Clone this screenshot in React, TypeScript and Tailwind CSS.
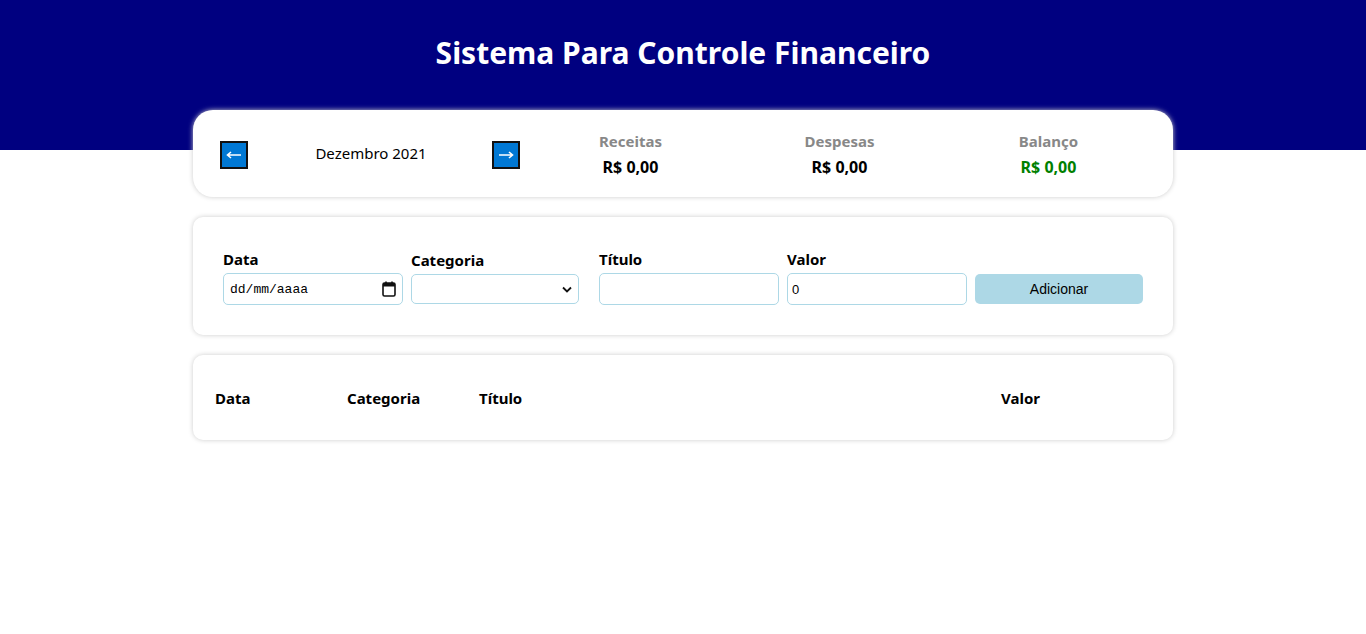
import React from "react";

function Arrow({ dir }: { dir: "left" | "right" }) {
  return (
    <button className="w-[28px] h-[28px] mt-[2px] bg-[#0078d4] border-2 border-[#111111] flex items-center justify-center">
      <svg width="16" height="10" viewBox="0 0 16 10">
        {dir === "left" ? (
          <path d="M15 5 H2 M5 2 L1.5 5 L5 8" fill="none" stroke="white" strokeWidth="1.6" />
        ) : (
          <path d="M1 5 H14 M11 2 L14.5 5 L11 8" fill="none" stroke="white" strokeWidth="1.6" />
        )}
      </svg>
    </button>
  );
}

function Info({ title, value, color }: { title: string; value: string; color?: string }) {
  return (
    <div className="flex-1 flex flex-col items-center">
      <div className="text-[15px] font-bold text-[#888888] leading-[20px]">{title}</div>
      <div className={`text-[16px] font-bold leading-[20px] mt-[6px] ${color ?? "text-black"}`}>{value}</div>
    </div>
  );
}

export default function App() {
  const font = { fontFamily: '"Noto Sans", "Open Sans", sans-serif' };
  return (
    <div className="min-h-[634px] bg-white" style={font}>
      <div className="bg-[#000080] h-[150px] flex justify-center pt-[33px]">
        <h1 className="text-white font-bold text-[30px] leading-[40px]">Sistema Para Controle Financeiro</h1>
      </div>
      <div className="w-[980px] mx-auto -mt-[40px] relative">
        {/* Card 1 */}
        <div className="bg-white rounded-[20px] shadow-[0_0_5px_#cccccc] h-[87px] px-[20px] flex items-center">
          <div className="w-[313px] flex items-center justify-between pl-[7px] pr-[6px]">
            <Arrow dir="left" />
            <div className="text-[15px] text-black pl-[2px]">Dezembro 2021</div>
            <Arrow dir="right" />
          </div>
          <div className="flex-1 flex">
            <Info title="Receitas" value="R$ 0,00" />
            <Info title="Despesas" value="R$ 0,00" />
            <Info title="Balanço" value="R$ 0,00" color="text-[#008000]" />
          </div>
        </div>

        {/* Card 2 */}
        <div className="bg-white rounded-[10px] shadow-[0_0_5px_#cccccc] mt-[20px] h-[118px] pl-[30px] pt-[32px] flex">
          <div className="w-[180px] mr-[8px]">
            <div className="font-bold text-[15px] leading-[20px] mb-[4px]">Data</div>
            <div className="h-[32px] border border-[#add8e6] rounded-[5px] flex items-center justify-between px-[6px]">
              <span className="text-[13px] text-black pt-[2px]" style={{ fontFamily: '"Liberation Mono", monospace' }}>dd/mm/aaaa</span>
              <svg width="14" height="16" viewBox="0 0 14 16">
                <rect x="1" y="2" width="12" height="13" rx="1.5" fill="none" stroke="#111" strokeWidth="1.6" />
                <rect x="1" y="2" width="12" height="3.5" fill="#111" />
                <rect x="3.2" y="0.5" width="1.6" height="3" fill="#111" />
                <rect x="9.2" y="0.5" width="1.6" height="3" fill="#111" />
              </svg>
            </div>
          </div>
          <div className="w-[168px] mr-[20px] pt-[1px]">
            <div className="font-bold text-[15px] leading-[20px] mb-[4px]">Categoria</div>
            <div className="h-[30px] border border-[#add8e6] rounded-[5px] flex items-center justify-end px-[6px]">
              <svg width="10" height="7" viewBox="0 0 10 7">
                <path d="M1 1.5 L5 5.5 L9 1.5" fill="none" stroke="#111" strokeWidth="1.8" />
              </svg>
            </div>
          </div>
          <div className="w-[180px] mr-[8px]">
            <div className="font-bold text-[15px] leading-[20px] mb-[4px]">Título</div>
            <input className="w-full h-[32px] border border-[#add8e6] rounded-[5px] outline-none" />
          </div>
          <div className="w-[180px] mr-[8px]">
            <div className="font-bold text-[15px] leading-[20px] mb-[4px]">Valor</div>
            <input
              defaultValue="0"
              className="w-full h-[32px] border border-[#add8e6] rounded-[5px] px-[4px] text-[13px] outline-none"
              style={{ fontFamily: '"Liberation Sans", Arial, sans-serif' }}
            />
          </div>
          <div className="w-[168px] pt-[25px]">
            <button
              className="w-full h-[30px] bg-[#add8e6] rounded-[5px] text-[14px] text-black"
              style={{ fontFamily: '"Liberation Sans", Arial, sans-serif' }}
            >
              Adicionar
            </button>
          </div>
        </div>

        {/* Card 3 */}
        <div className="bg-white rounded-[10px] shadow-[0_0_5px_#cccccc] mt-[20px] h-[85px] px-[20px] flex items-center">
          <div className="flex w-full font-bold text-[15px] pl-[2px] pt-[2px]">
            <div className="w-[132px]">Data</div>
            <div className="w-[132px]">Categoria</div>
            <div className="w-[522px]">Título</div>
            <div>Valor</div>
          </div>
        </div>
      </div>
    </div>
  );
}
